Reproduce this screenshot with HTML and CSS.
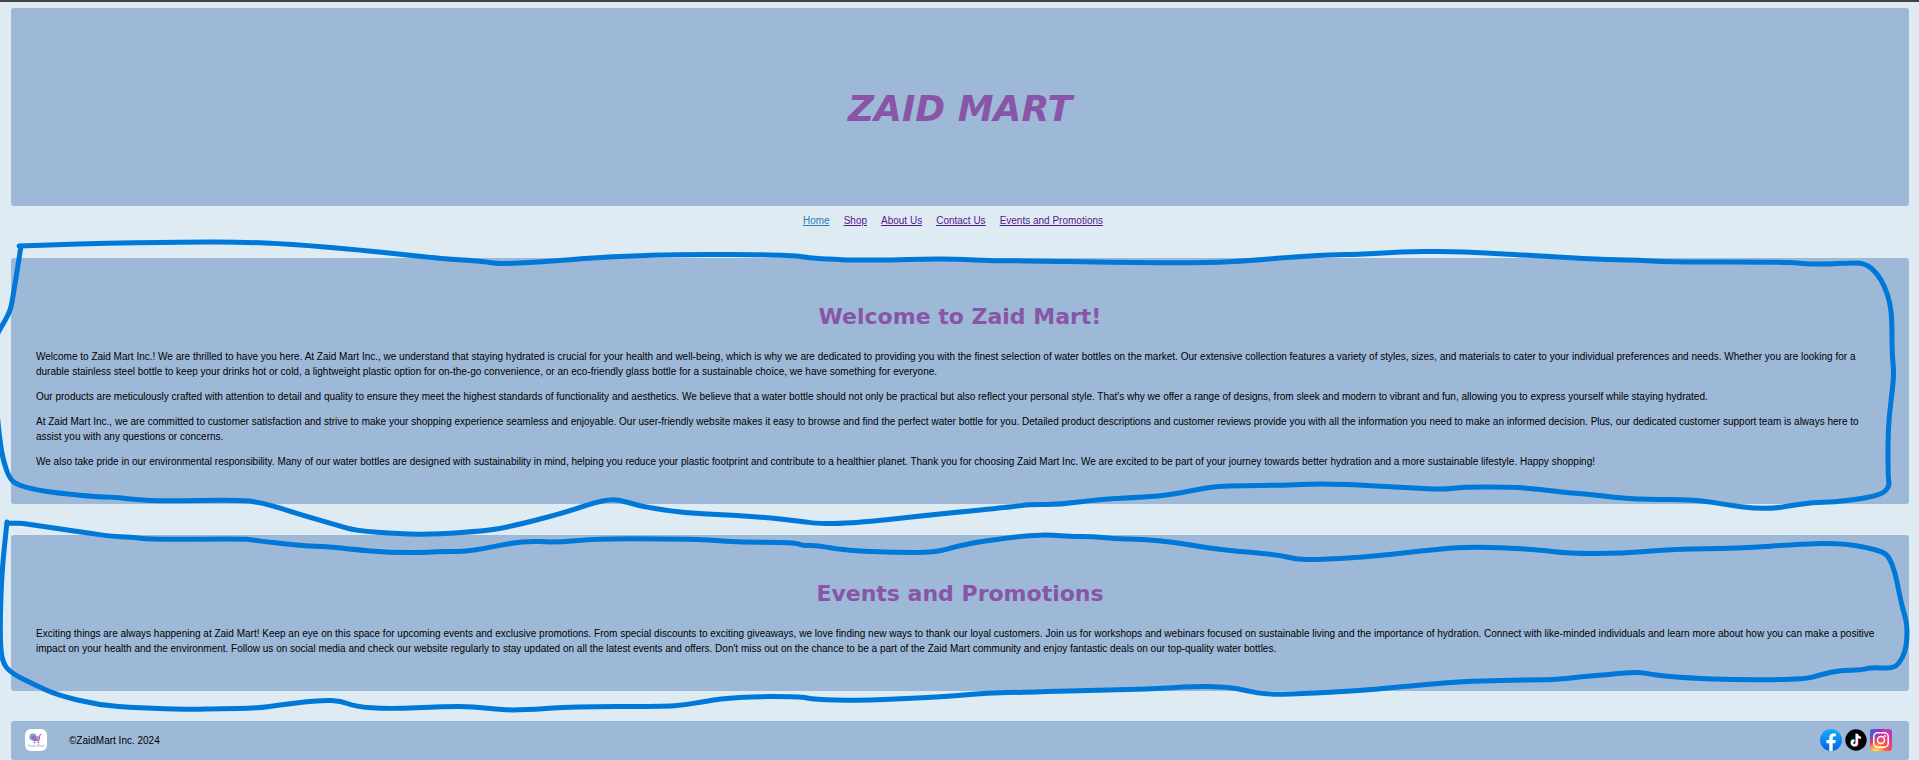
FILE: index.html
```html
<!DOCTYPE html>
<html lang="en">
<head>
<meta charset="utf-8">
<title>Zaid Mart</title>
<link rel="stylesheet" href="styles.css">
</head>
<body>
<header class="banner card">
  <h1 class="banner-title">ZAID MART</h1>
</header>

<nav class="nav">
  <ul class="nav-list">
    <li><a class="nav-link current" href="#home">Home</a></li>
    <li><a class="nav-link" href="#shop">Shop</a></li>
    <li><a class="nav-link" href="#about">About Us</a></li>
    <li><a class="nav-link" href="#contact">Contact Us</a></li>
    <li><a class="nav-link" href="#events">Events and Promotions</a></li>
  </ul>
</nav>

<main class="sections">
  <section class="section card" id="home">
    <h2 class="section-title">Welcome to Zaid Mart!</h2>
    <p>Welcome to Zaid Mart Inc.! We are thrilled to have you here. At Zaid Mart Inc., we understand that staying hydrated is crucial for your health and well-being, which is why we are dedicated to providing you with the finest selection of water bottles on the market. Our extensive collection features a variety of styles, sizes, and materials to cater to your individual preferences and needs. Whether you are looking for a durable stainless steel bottle to keep your drinks hot or cold, a lightweight plastic option for on-the-go convenience, or an eco-friendly glass bottle for a sustainable choice, we have something for everyone.</p>
    <p>Our products are meticulously crafted with attention to detail and quality to ensure they meet the highest standards of functionality and aesthetics. We believe that a water bottle should not only be practical but also reflect your personal style. That's why we offer a range of designs, from sleek and modern to vibrant and fun, allowing you to express yourself while staying hydrated.</p>
    <p>At Zaid Mart Inc., we are committed to customer satisfaction and strive to make your shopping experience seamless and enjoyable. Our user-friendly website makes it easy to browse and find the perfect water bottle for you. Detailed product descriptions and customer reviews provide you with all the information you need to make an informed decision. Plus, our dedicated customer support team is always here to assist you with any questions or concerns.</p>
    <p>We also take pride in our environmental responsibility. Many of our water bottles are designed with sustainability in mind, helping you reduce your plastic footprint and contribute to a healthier planet. Thank you for choosing Zaid Mart Inc. We are excited to be part of your journey towards better hydration and a more sustainable lifestyle. Happy shopping!</p>
  </section>

  <section class="section card" id="events">
    <h2 class="section-title">Events and Promotions</h2>
    <p>Exciting things are always happening at Zaid Mart! Keep an eye on this space for upcoming events and exclusive promotions. From special discounts to exciting giveaways, we love finding new ways to thank our loyal customers. Join us for workshops and webinars focused on sustainable living and the importance of hydration. Connect with like-minded individuals and learn more about how you can make a positive impact on your health and the environment. Follow us on social media and check our website regularly to stay updated on all the latest events and offers. Don't miss out on the chance to be a part of the Zaid Mart community and enjoy fantastic deals on our top-quality water bottles.</p>
  </section>
</main>

<footer class="footer card">
  <svg class="icon" viewBox="0 0 22 22" role="img" aria-label="Zaid Mart logo">
    <rect width="22" height="22" rx="6" fill="#fff"/>
    <circle cx="8" cy="8" r="3.600" fill="#7f9fca"/>
    <path d="M16.500 5.500H15L14 11.500H8.500L7 8H14" fill="none" stroke="#9a62b4" stroke-width="1"/>
    <path d="M8 8.500h6l-.5 2.500h-5z" fill="#9a62b4" opacity=".75"/>
    <circle cx="9.500" cy="13.300" r=".9" fill="#9a62b4"/>
    <circle cx="13.300" cy="13.300" r=".9" fill="#9a62b4"/>
    <text class="logo-text" x="11" y="18" text-anchor="middle">Zaid Mart</text>
  </svg>
  <span class="copyright">©ZaidMart Inc. 2024</span>
  <div class="social">
    <a class="social-link" href="#facebook" aria-label="Facebook">
      <svg class="icon" viewBox="0 0 22 22">
        <defs><linearGradient id="fb" x1="0" y1="0" x2="0" y2="1"><stop offset="0" stop-color="#18acfe"/><stop offset="1" stop-color="#0163e0"/></linearGradient></defs>
        <circle cx="11" cy="11" r="11" fill="url(#fb)"/>
        <path d="M15.300 14.200l.5-3.200h-3.100V9c0-.9.450-1.750 1.800-1.750h1.400V4.600s-1.250-.2-2.500-.2c-2.500 0-4.150 1.500-4.150 4.250V11H6.400v3.200h2.850v7.660a11.300 11.300 0 0 0 3.450 0V14.200z" fill="#fff"/>
      </svg>
    </a>
    <a class="social-link" href="#tiktok" aria-label="TikTok">
      <svg class="icon" viewBox="0 0 22 22">
        <circle cx="11" cy="11" r="10.700" fill="#000"/>
        <g fill="none" stroke-width="2">
          <path d="M11.300 4.600v8.800a2.450 2.450 0 1 1-2.450-2.450M11.300 4.600c.3 2 1.700 3.400 3.900 3.600" stroke="#25f4ee"/>
          <path d="M12.500 5.600v8.800a2.450 2.450 0 1 1-2.450-2.450M12.500 5.600c.3 2 1.700 3.400 3.900 3.600" stroke="#fe2c55"/>
          <path d="M11.900 5.100v8.800a2.450 2.450 0 1 1-2.450-2.450M11.900 5.100c.3 2 1.700 3.400 3.900 3.600" stroke="#fff"/>
        </g>
      </svg>
    </a>
    <a class="social-link" href="#instagram" aria-label="Instagram">
      <svg class="icon" viewBox="0 0 22 22">
        <defs>
          <radialGradient id="ig-warm" cx=".27" cy="1.080" r="1"><stop offset="0" stop-color="#fd5"/><stop offset=".1" stop-color="#fd5"/><stop offset=".5" stop-color="#ff543e"/><stop offset="1" stop-color="#c837ab"/></radialGradient>
          <radialGradient id="ig-cool" cx="-.1" cy="0" r=".8"><stop offset="0" stop-color="#3771c8"/><stop offset=".2" stop-color="#3771c8"/><stop offset="1" stop-color="#60f" stop-opacity="0"/></radialGradient>
        </defs>
        <rect width="22" height="22" rx="3" fill="url(#ig-warm)"/>
        <rect width="22" height="22" rx="3" fill="url(#ig-cool)"/>
        <g fill="none" stroke="#fff" stroke-width="1.500">
          <rect x="3.800" y="3.800" width="14.400" height="14.400" rx="4"/>
          <circle cx="11" cy="11" r="3.500"/>
        </g>
        <circle cx="15" cy="7" r="1" fill="#fff"/>
      </svg>
    </a>
  </div>
</footer>

<svg class="ink" viewBox="0 0 1919 760" preserveAspectRatio="none" aria-hidden="true"></svg>
<script src="ink.js"></script>
</body>
</html>
```
FILE: styles.css
```css
* {
  box-sizing: border-box;
}

body {
  margin: 0;
  padding: 6px 10px 0 11px;
  border-top: 2px solid #434141;
  position: relative;
  overflow-x: hidden;
  background: #deebf3;
  color: #000;
  font-family: "Liberation Sans", Arial, sans-serif;
  font-size: 10px;
  line-height: 15px;
}

.card {
  background: #9eb9d8;
  border-radius: 3px;
}

.banner {
  display: flex;
  align-items: center;
  justify-content: center;
  padding: 80px 25px 76px;
}

.banner-title {
  margin: 0;
  color: #8855a8;
  font-family: "DejaVu Sans", Verdana, sans-serif;
  font-size: 36px;
  font-style: italic;
  line-height: 42px;
}

.nav {
  padding: 7px 0 30px;
}

.nav-list {
  display: flex;
  justify-content: center;
  margin: 0;
  padding: 0;
  list-style: none;
}

.nav-list li {
  margin-right: 14px;
}

.nav-link {
  color: #551a8b;
}

.nav-link.current {
  color: #2980b9;
}

.sections {
  display: flex;
  flex-direction: column;
  gap: 31px;
  margin-bottom: 30px;
}

.section {
  padding: 41px 25px 35px;
}

.section-title {
  margin: 0 0 14px;
  color: #8855a8;
  font-family: "DejaVu Sans", Verdana, sans-serif;
  font-size: 22px;
  line-height: 36px;
  text-align: center;
}

.section p {
  margin: 0;
}

.section p + p {
  margin-top: 10px;
}

.footer {
  display: flex;
  align-items: center;
  padding: 8px 17px 9px 14px;
}

.icon {
  display: block;
  width: 22px;
  height: 22px;
}

.logo-text {
  fill: #8fa9cf;
  font-size: 4px;
}

.copyright {
  margin-left: 22px;
}

.social {
  display: flex;
  gap: 3px;
  margin-left: auto;
}

.social-link {
  display: block;
}

/* Freehand marker lines drawn over the page */
.ink {
  position: absolute;
  top: -2px;
  left: 0;
  width: 100%;
  height: calc(100% + 2px);
  pointer-events: none;
}

.ink path {
  fill: none;
  stroke: #0078d7;
  stroke-width: 5;
  stroke-linejoin: round;
  stroke-linecap: round;
}
```
FILE: ink.js
```js
// Marker strokes as "x y" points; each is drawn as a smooth curve.
const strokes = [
  "19 246,80 243.5,192 241.8,240 242,290 244,360 250,408 255,440 258.5,485 261.5,498 264,540 262,600 257.5,640 255.7,677 254.3,787 254.7,817 258.7,836 259.3,848 260,893 260,922 259,954 259,995 261,1003 260.5,1130 262.7,1207 263,1252 260.5,1280 258,1332 254.7,1357 254.3,1401 252,1446 251.2,1483 252.7,1544 256.3,1597 259.3,1638 260.3,1675 262,1789 262,1806 264,1830 264,1846 263,1865 263,1877 273,1885 287,1890 303,1892 320,1892 353,1894 373,1892 393,1888 427,1888 477,1889.5 485,1885 492,1875 496,1859 499,1834 502,1812 502.7,1793 505.3,1775 508.3,1754 508.3,1728 505,1697 499.7,1638 499.3,1614 497.3,1593 494.7,1565 492.3,1528 488,1508 487,1463 487,1444 489.5,1422 488.3,1377 486,1348 484.3,1312 484,1279 485.3,1244 485.5,1215 486.5,1195 490,1175 494,1154 496.5,1097 499.5,1060 504.7,1028 504.5,1015 506.7,946 513.3,868 521.7,836 523.7,815 523.3,803 521.5,766 517.3,721 514.7,685 513,644 507,629 502.5,608 498,563 513.3,510 526.7,486 530.7,437 534.3,400 534,355 530.5,339 525.7,302 515,282 508.7,261 502.7,241 500,163 501,139 500,112 497,98 497,57 493,37 490,20 485.7,10 480,3 460,0 441,-3 413",
  "-3 335,0 329,10 312,13 297,21 246",
  "8 523,20 523,33 525,82 532,110 536.3,131 537,151 539.7,241 538.7,253 540,298 545.7,331 546.7,351 549.3,390 552.5,424 552.5,441 551.5,469 551.7,523 540.5,555 542.7,596 538.7,664 538.7,709 540,742 542.3,779 542.3,797 543.3,803 545.7,817 545.3,836 549,864 551.3,893 552.3,934 552.7,958 546,983 541,1028 535.3,1052 535,1069 536.3,1093 536.5,1113 538.7,1142 539.3,1175 542.3,1203 547.3,1236 551.3,1279 554.7,1295 559.3,1316 559.7,1373 556.7,1438 549,1475 546.5,1536 549.3,1569 553.5,1622 553.3,1675 549,1736 548.5,1805 543.8,1826 543.5,1846 544,1867 547.5,1883 552,1889 557,1895 572,1898.5 590,1903 610,1907 623,1907 640,1905 652,1899.5 663,1893 668.3,1871 667.5,1863 669.7,1838 670.7,1822 674.3,1805 679.3,1740 680,1687 678,1654 675,1638 671.7,1605 675,1581 676.7,1561 679.3,1532 680,1491 680.7,1454 682,1361 690.7,1299 694,1264 694.3,1244 690,1228 687,1199 686.3,1146 689,1089 690.3,1028 692.3,987 692.7,946 696.7,856 700.7,815 699.5,799 696.5,738 696.7,705 701.3,685 705,664 706.5,571 706.7,535 709.5,502 710.2,473 706.5,445 706.5,388 709,355 706.5,341 701,322 700,282 704.7,257 708.3,220 708.5,192 709.5,139 708,98 705,57 695,33 684,11 673,2 662,0 637,1 590,3 560,7 522"
];

// Quadratic curves between segment midpoints, with each point as a control
function smoothPath(text) {
  const p = text.split(",").map(s => s.split(" ").map(Number));
  let d = "M" + p[0].join(" ");
  for (let i = 1; i < p.length - 1; i++) {
    const mx = (p[i][0] + p[i + 1][0]) / 2;
    const my = (p[i][1] + p[i + 1][1]) / 2;
    d += "Q" + p[i].join(" ") + " " + mx + " " + my;
  }
  return d + "L" + p[p.length - 1].join(" ");
}

const ink = document.querySelector(".ink");
for (const stroke of strokes) {
  const path = document.createElementNS("http://www.w3.org/2000/svg", "path");
  path.setAttribute("d", smoothPath(stroke));
  ink.appendChild(path);
}
```
